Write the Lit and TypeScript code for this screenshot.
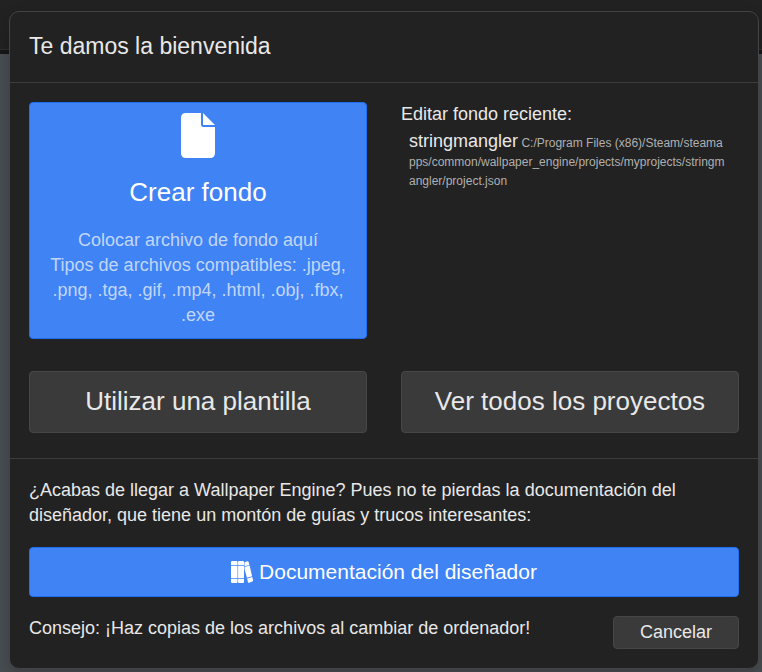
import { LitElement, html, css } from "lit";
import { customElement, state } from "lit/decorators.js";

interface Project {
  name: string;
  path: string;
}

@customElement("app-root")
export class AppRoot extends LitElement {
  static styles = css`
    :host {
      display: block;
      box-sizing: border-box;
      min-height: 100vh;
      padding: 11px 3px 3px 9px;
      background: linear-gradient(#222 0 49px, #2e2e2e 49px 50px, #171717 50px 54px, #484d52 54px);
      color: #e8e8e8;
      font: 18px/25px "Liberation Sans", Arial, sans-serif;
    }
    * {
      box-sizing: border-box;
    }
    .dialog {
      background: #222;
      border: 1px solid #444;
      border-radius: 10px;
      box-shadow: 0 5px 15px rgba(0, 0, 0, 0.2);
    }
    .header {
      padding: 19px 19px 21px;
      border-bottom: 1px solid #3c3c3c;
    }
    .title {
      margin: 0;
      font-size: 23px;
      line-height: 30px;
      font-weight: 400;
    }
    .body {
      display: grid;
      grid-template-columns: 1fr 1fr;
      gap: 32px 34px;
      padding: 19px 19px 25px;
    }
    .btn {
      display: block;
      width: 100%;
      margin: 0;
      border: 1px solid #464646;
      border-radius: 4px;
      background: #3a3a3a;
      color: inherit;
      font: inherit;
      text-align: center;
      text-decoration: none;
      cursor: pointer;
    }
    .primary {
      border-color: #1f6ff2;
      background: #4083f5;
      color: #fff;
    }
    .create {
      padding: 10px 20px;
    }
    .file-icon {
      display: block;
      width: 34px;
      height: 45px;
      margin: 0 auto 16px;
    }
    .create-title {
      display: block;
      margin-bottom: 17px;
      font-size: 26px;
      line-height: 37px;
    }
    .hint {
      display: block;
      color: #c0d6fb;
    }
    .recent-title {
      margin: 0;
      font-size: inherit;
      font-weight: 400;
    }
    .list {
      margin: 0;
      padding: 0;
      list-style: none;
    }
    .project {
      display: block;
      padding: 5px 11px 5px 8px;
      color: #b0b0b0;
      font-size: 12px;
      line-height: 19px;
      text-decoration: none;
      word-break: break-all;
    }
    .name {
      color: #e8e8e8;
      font-size: 18px;
    }
    .large {
      padding: 11px 10px 13px;
      font-size: 26px;
      line-height: 36px;
    }
    .footer {
      padding: 19px;
      border-top: 1px solid #3c3c3c;
    }
    .text {
      margin: 0;
    }
    .docs {
      display: flex;
      align-items: center;
      justify-content: center;
      gap: 6px;
      margin: 19px 0;
      padding: 9px;
      font-size: 21px;
      line-height: 30px;
    }
    .books-icon {
      width: 22px;
      height: 22px;
    }
    .end {
      display: flex;
      align-items: flex-start;
      justify-content: space-between;
      gap: 20px;
    }
    .cancel {
      width: auto;
      padding: 3px 26px;
    }
  `;

  @state() private recent: Project[] = [
    {
      name: "stringmangler",
      path: "C:/Program Files (x86)/Steam/steamapps/common/wallpaper_engine/projects/myprojects/stringmangler/project.json",
    },
  ];

  render() {
    return html`
      <main class="dialog" role="dialog" aria-labelledby="title">
        <header class="header">
          <h1 class="title" id="title">Te damos la bienvenida</h1>
        </header>
        <div class="body">
          <button class="btn primary create" type="button">
            <svg class="file-icon" viewBox="0 0 34 45" aria-hidden="true">
              <path fill="#fff" d="M5 0H20V11.500Q20 14 22.500 14H34V40Q34 45 29 45H5Q0 45 0 40V5Q0 0 5 0ZM22 0L34 12H22Z" />
            </svg>
            <span class="create-title">Crear fondo</span>
            <span class="hint">Colocar archivo de fondo aquí</span>
            <span class="hint">Tipos de archivos compatibles: .jpeg, .png, .tga, .gif, .mp4, .html, .obj, .fbx, .exe</span>
          </button>
          <section>
            <h2 class="recent-title">Editar fondo reciente:</h2>
            <ul class="list">
              ${this.recent.map(
                (p) => html`<li><a class="project" href="#"><span class="name">${p.name}</span> ${p.path}</a></li>`
              )}
            </ul>
          </section>
          <button class="btn large" type="button">Utilizar una plantilla</button>
          <button class="btn large" type="button">Ver todos los proyectos</button>
        </div>
        <footer class="footer">
          <p class="text">
            ¿Acabas de llegar a Wallpaper Engine? Pues no te pierdas la documentación del diseñador, que tiene un montón
            de guías y trucos interesantes:
          </p>
          <a class="btn primary docs" href="#">
            <svg class="books-icon" viewBox="0 0 22 22" aria-hidden="true">
              <g fill="#fff">
                <path d="M1 0H5.500Q6.500 0 6.500 1V4.200H0V1Q0 0 1 0ZM0 4.900H6.500V17.100H0ZM0 17.800H6.500V21Q6.500 22 5.500 22H1Q0 22 0 21Z" />
                <path d="M8 0H12Q13 0 13 1V4.200H7.100V1Q7.100 0 8 0ZM7.100 4.900H13V17.100H7.100ZM7.100 17.800H13V21Q13 22 12 22H8Q7.100 22 7.100 21Z" />
                <path d="M13.500 1.200L16.300 .3Q17.300 0 17.600 1L18.400 3.900L13.500 5.300ZM13.500 6L18.600 4.600L21.100 15.200L15.900 16.700L13.500 8ZM16.100 17.400L21.300 15.900L22 19.100Q22.200 20.200 21.200 20.500L18.200 21.700Q17.200 22 16.900 20.900Z" />
              </g>
            </svg>
            <span>Documentación del diseñador</span>
          </a>
          <div class="end">
            <p class="text">Consejo: ¡Haz copias de los archivos al cambiar de ordenador!</p>
            <button class="btn cancel" type="button">Cancelar</button>
          </div>
        </footer>
      </main>
    `;
  }
}
